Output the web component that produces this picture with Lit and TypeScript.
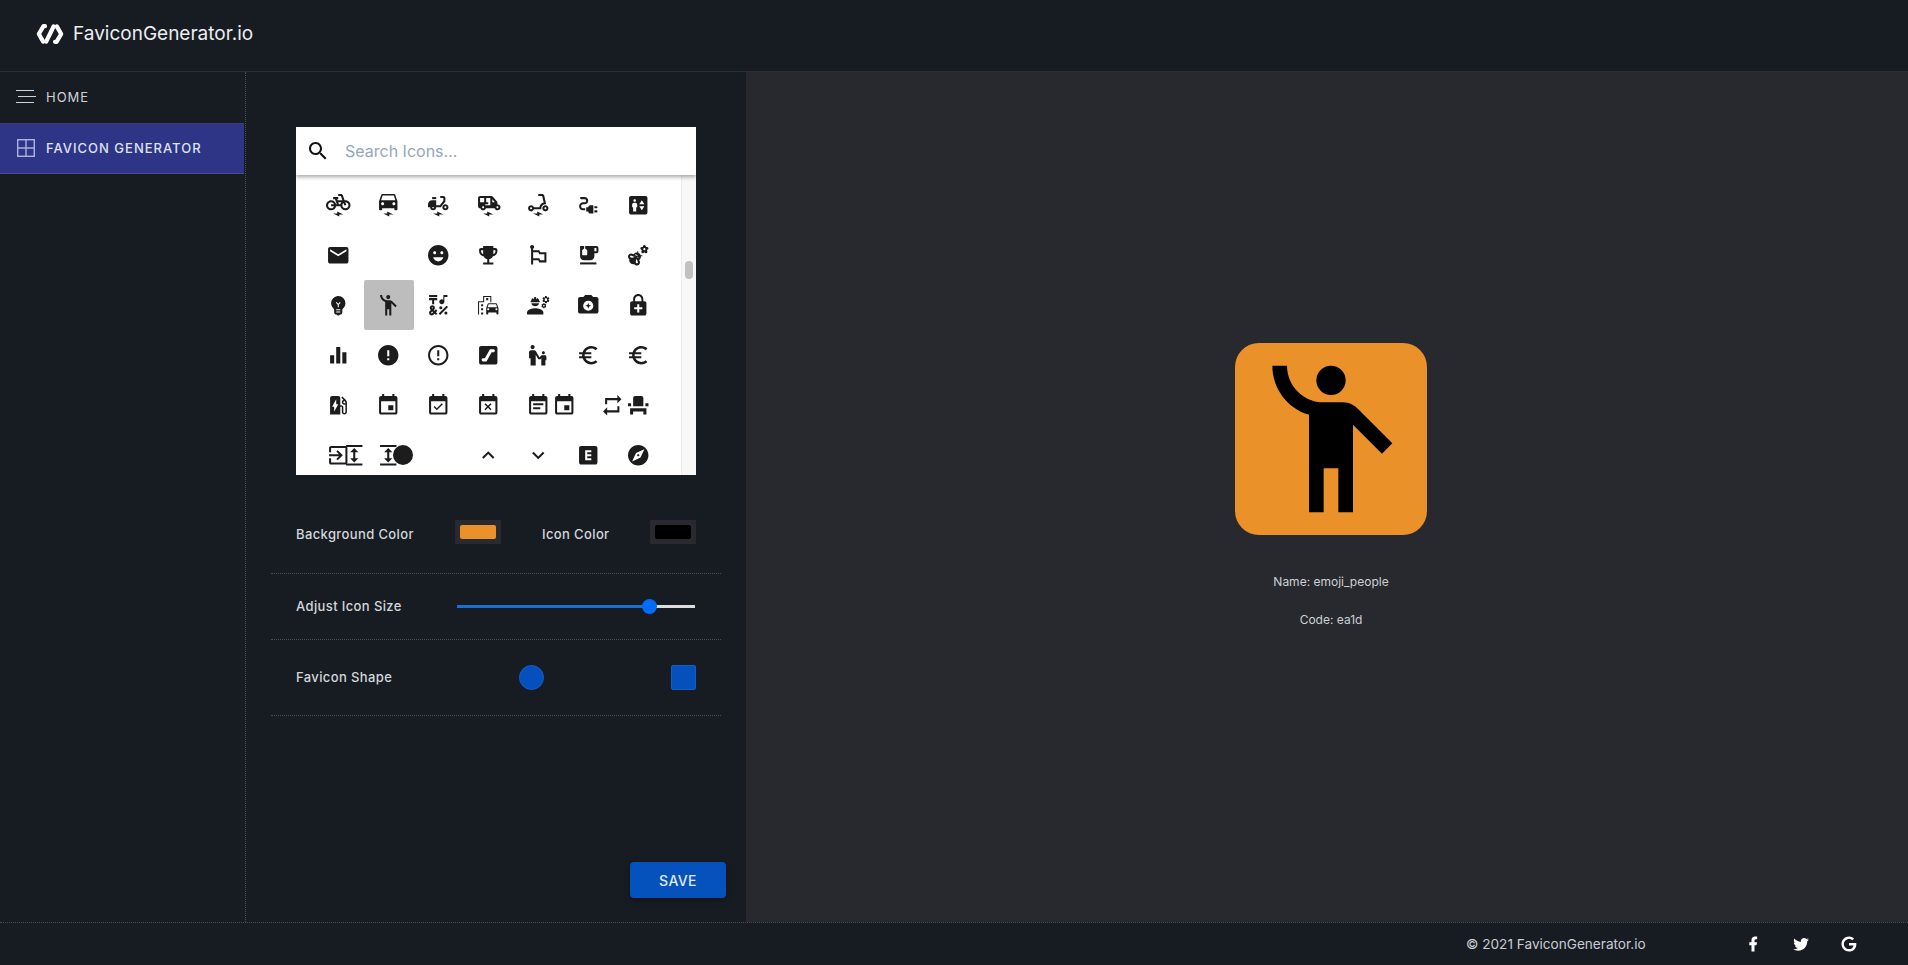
import { LitElement, html, css, svg } from "lit";
import { customElement } from "lit/decorators.js";
import { styleMap } from "lit/directives/style-map.js";

const BOLT = svg`<path d="M7 20h4v-2l6 3h-4v2z"/>`;
const CAL = "M19 3h-1V1h-2v2H8V1H6v2H5c-1.11 0-1.99.9-1.99 2L3 19c0 1.1.89 2 2 2h14c1.1 0 2-.9 2-2V5c0-1.1-.9-2-2-2zm0 16H5V8h14v11z";
const EURO = "M15 18.5c-2.51 0-4.68-1.42-5.76-3.5H15v-2H8.58c-.05-.33-.08-.66-.08-1s.03-.67.08-1H15V9H9.24C10.32 6.92 12.5 5.5 15 5.5c1.61 0 3.09.59 4.23 1.57L21 5.3C19.41 3.87 17.3 3 15 3c-3.92 0-7.24 2.51-8.48 6H3v2h3.06c-.04.33-.06.66-.06 1 0 .34.02.67.06 1H3v2h3.52c1.24 3.49 4.56 6 8.48 6 2.31 0 4.41-.87 6-2.3l-1.78-1.77c-1.13.98-2.6 1.57-4.22 1.57z";
const EVENT = "M17 12h-5v5h5v-5zM16 1v2H8V1H6v2H5c-1.11 0-1.99.9-1.99 2L3 19c0 1.1.89 2 2 2h14c1.1 0 2-.9 2-2V5c0-1.1-.9-2-2-2h-1V1h-2zm3 18H5V8h14v11z";
const EXPAND = "M4 20h16v2H4zM4 2h16v2H4zM13 9h3l-4-4-4 4h3v6H8l4 4 4-4h-3z";
const PEOPLE = svg`<circle cx="12" cy="4" r="2"/><path d="M15.89 8.11C15.5 7.72 14.83 7 13.53 7c-.21 0-1.42 0-2.54 0C8.24 6.99 6 4.75 6 2H4c0 3.16 2.11 5.84 5 6.71V22h2v-6h2v6h2V10.05L18.95 14l1.41-1.41-4.47-4.48z"/>`;

type Glyph = { g: unknown; dx?: number };
type Cell = { glyphs: Glyph[]; on?: boolean; dot?: boolean };
const p = (d: string) => svg`<path d=${d}/>`;
const one = (g: unknown): Cell => ({ glyphs: [{ g }] });

const CELLS: Cell[] = [
  one(svg`<path d="M19 7h-.82l-1.7-4.68C16.19 1.53 15.44 1 14.6 1H12v2h2.6l1.46 4h-4.81l-.36-1H12V4H7v2h1.75l1.82 5H9.9C9.46 8.77 7.59 7.12 5.25 7.01 2.45 6.87 0 9.2 0 12c0 2.8 2.2 5 5 5 2.46 0 4.45-1.69 4.9-4h4.2c.44 2.23 2.31 3.88 4.65 3.99 2.8.13 5.25-2.19 5.25-5C24 9.2 21.8 7 19 7zM7.82 13c-.4 1.17-1.49 2-2.82 2-1.68 0-3-1.32-3-3s1.32-3 3-3c1.33 0 2.42.83 2.82 2H5v2h2.82zm6.28-2h-1.4l-.73-2H15c-.44.58-.76 1.25-.9 2zm4.9 4c-1.68 0-3-1.32-3-3 0-.93.41-1.73 1.05-2.28l.96 2.64 1.88-.68-.97-2.67c.03 0 .06-.01.09-.01 1.68 0 3 1.32 3 3s-1.33 3-3.01 3z"/>${BOLT}`),
  one(svg`<path d="M18.92 2.01C18.72 1.42 18.16 1 17.5 1h-11c-.66 0-1.21.42-1.42 1.01L3 8v8c0 .55.45 1 1 1h1c.55 0 1-.45 1-1v-1h12v1c0 .55.45 1 1 1h1c.55 0 1-.45 1-1V8l-2.08-5.99zM6.5 12C5.67 12 5 11.33 5 10.5S5.67 9 6.5 9 8 9.67 8 10.5 7.33 12 6.5 12zm11 0c-.83 0-1.5-.67-1.5-1.5S16.67 9 17.5 9s1.5.67 1.5 1.5-.67 1.5-1.5 1.5zM5 7l1.5-4.5h11L19 7H5z"/>${BOLT}`),
  one(svg`<path d="M19 5c0-1.1-.9-2-2-2h-3v2h3v2.65L13.52 12H10V7H6c-2.21 0-4 1.79-4 4v3h2c0 1.66 1.34 3 3 3s3-1.34 3-3h4.48L19 8.35V5zM7 15c-.55 0-1-.45-1-1h2c0 .55-.45 1-1 1z"/><path d="M6 4h4v2H6z"/><path d="M19 11c-1.66 0-3 1.34-3 3s1.34 3 3 3 3-1.34 3-3-1.34-3-3-3zm0 4c-.55 0-1-.45-1-1s.45-1 1-1 1 .45 1 1-.45 1-1 1z"/>${BOLT}`),
  one(svg`<path d="M21 11.18V9.72c0-.47-.16-.92-.46-1.28L16.6 3.72c-.38-.46-.94-.72-1.54-.72H4c-1.1 0-2 .9-2 2v8c0 1.1.9 2 2 2h.18C4.6 16.16 5.7 17 7 17s2.4-.84 2.82-2h8.37c.41 1.16 1.51 2 2.81 2 1.66 0 3-1.34 3-3 0-1.3-.84-2.4-2-2.82zM18.4 9H16V6.12L18.4 9zM4 5h4v4H4V5zm3 10c-.55 0-1-.45-1-1s.45-1 1-1 1 .45 1 1-.45 1-1 1zm2-3v-1h3V9h-2V5h4v7H9zm12 3c-.55 0-1-.45-1-1s.45-1 1-1 1 .45 1 1-.45 1-1 1z"/>${BOLT}`),
  one(svg`<path d="M7.82 16H15v-1c0-2.21 1.79-4 4-4h.74l-1.9-8.44C17.63 1.65 16.82 1 15.89 1H12v2h3.89l1.4 6.25h-.01C14.23 9.87 13 12.52 13 15v-1H7.82C7.4 12.84 6.3 12 5 12c-1.66 0-3 1.34-3 3s1.34 3 3 3c1.3 0 2.4-.84 2.82-2zM5 16c-.55 0-1-.45-1-1s.45-1 1-1 1 .45 1 1-.45 1-1 1z"/><path d="M19 12c-1.66 0-3 1.34-3 3s1.34 3 3 3 3-1.34 3-3-1.34-3-3-3zm0 4c-.55 0-1-.45-1-1s.45-1 1-1 1 .45 1 1-.45 1-1 1z"/>${BOLT}`),
  one(svg`<path d="M21 14c0-.55-.45-1-1-1h-2v2h2c.55 0 1-.45 1-1z"/><path d="M20 17h-2v2h2c.55 0 1-.45 1-1s-.45-1-1-1z"/><path d="M12 14h-2v4h2c0 1.1.9 2 2 2h3v-8h-3c-1.1 0-2 .9-2 2z"/><path d="M5 13c0-1.1.9-2 2-2h1.5c1.93 0 3.5-1.57 3.5-3.5S10.43 4 8.5 4H5c-.55 0-1 .45-1 1s.45 1 1 1h3.5c.83 0 1.5.67 1.5 1.5S9.33 9 8.5 9H7c-2.21 0-4 1.79-4 4s1.79 4 4 4h2v-2H7c-1.1 0-2-.9-2-2z"/>`),
  one(p("M19 3H5c-1.1 0-2 .9-2 2v14c0 1.1.9 2 2 2h14c1.1 0 2-.9 2-2V5c0-1.1-.9-2-2-2zM8.5 6c.69 0 1.25.56 1.25 1.25S9.19 8.5 8.5 8.5s-1.25-.56-1.25-1.25S7.81 6 8.5 6zM11 14h-1v4H7v-4H6v-2.5c0-1.1.9-2 2-2h1c1.1 0 2 .9 2 2V14zm4.5 3L13 13h5l-2.5 4zM13 11l2.5-4 2.5 4h-5z")),
  one(p("M20 4H4c-1.1 0-1.99.9-1.99 2L2 18c0 1.1.9 2 2 2h16c1.1 0 2-.9 2-2V6c0-1.1-.9-2-2-2zm0 4l-8 5-8-5V6l8 5 8-5v2z")),
  { glyphs: [] },
  one(p("M11.99 2C6.47 2 2 6.48 2 12s4.47 10 9.99 10C17.52 22 22 17.52 22 12S17.52 2 11.99 2zM8.5 8C9.33 8 10 8.67 10 9.5S9.33 11 8.5 11 7 10.33 7 9.5 7.67 8 8.5 8zM12 18c-2.28 0-4.22-1.66-5-4h10c-.78 2.34-2.72 4-5 4zm3.5-7c-.83 0-1.5-.67-1.5-1.5S14.67 8 15.5 8s1.5.67 1.5 1.5-.67 1.5-1.5 1.5z")),
  one(p("M19 5h-2V3H7v2H5c-1.1 0-2 .9-2 2v1c0 2.55 1.92 4.63 4.39 4.94.63 1.5 1.98 2.63 3.61 2.96V19H7v2h10v-2h-4v-3.1c1.63-.33 2.98-1.46 3.61-2.96C19.08 12.63 21 10.55 21 8V7c0-1.1-.9-2-2-2zM5 8V7h2v3.82C5.84 10.4 5 9.3 5 8zm14 0c0 1.3-.84 2.4-2 2.82V7h2v1z")),
  one(p("M14 9l-1-2H7V5.72C7.6 5.38 8 4.74 8 4c0-1.1-.9-2-2-2S4 2.9 4 4c0 .74.4 1.38 1 1.72V21h2v-4h5l1 2h7V9h-6zm4 8h-4l-1-2H7V9h5l1 2h5v6z")),
  one(svg`<path d="M20 3H9v2.4l1.81 1.45c.12.09.19.24.19.39v4.26c0 .28-.22.5-.5.5h-4c-.28 0-.5-.22-.5-.5V7.24c0-.15.07-.3.19-.39L8 5.4V3H4v10c0 2.21 1.79 4 4 4h6c2.21 0 4-1.79 4-4v-3h2c1.11 0 2-.9 2-2V5c0-1.11-.89-2-2-2zm0 5h-2V5h2v3z"/><path d="M4 19h16v2H4z"/>`),
  one(svg`<path d="M21.94 4.88C21.76 4.35 21.25 4 20.68 4c-.03 0-.06 0-.09 0H19.6l-.31-.97C19.15 2.43 18.61 2 18 2c-.61 0-1.15.43-1.29 1.04L16.4 4h-.98c-.03 0-.06 0-.09 0-.57 0-1.08.35-1.26.88-.19.56.04 1.17.56 1.48l.87.52-.4 1.24c-.23.58-.04 1.25.45 1.62.23.17.51.26.78.26.31 0 .61-.11.86-.32L18 8.98l.81.7c.25.21.55.32.86.32.27 0 .55-.09.78-.26.5-.37.68-1.04.45-1.62l-.39-1.24.87-.52c.53-.31.75-.92.56-1.48zM18 7c-.55 0-1-.45-1-1s.45-1 1-1 1 .45 1 1-.45 1-1 1z"/><path fill-rule="evenodd" d="M13.49 10.51c-.43-.43-.94-.73-1.49-.93V8h-1v1.38c-.11-.01-.23-.03-.34-.03-1.02 0-2.05.39-2.83 1.17-.16.16-.3.34-.43.53L6 10.52c-1.56-.55-3.28.27-3.83 1.82-.27.75-.23 1.57.12 2.29.23.48.58.87 1 1.16-.38 1.35-.06 2.85 1 3.91 1.06 1.06 2.57 1.38 3.91 1 .29.42.68.77 1.16 1 .42.2.85.3 1.29.3.34 0 .68-.06 1.01-.17 1.56-.55 2.38-2.27 1.82-3.85l-.52-1.37c.18-.13.36-.27.53-.43.87-.87 1.24-2.04 1.14-3.17H16v-1h-1.59c-.19-.55-.49-1.06-.92-1.49zM4.67 14.29c-.25-.09-.45-.27-.57-.51s-.13-.51-.04-.76c.19-.52.76-.79 1.26-.61l3.16 1.19c-1.15.6-2.63 1.11-3.81.69zM10.99 19.94c-.25.09-.52.08-.76-.04-.24-.11-.42-.32-.51-.57-.42-1.18.09-2.66.69-3.81l1.19 3.16c.19.52-.08 1.07-.61 1.26zM12.2 14.6l-.61-1.61-1.67-.63-1.52-.56c.36-.29.79-.46 1.26-.46.53 0 1.04.21 1.41.59.73.73.77 1.87.13 2.67z"/>`),
  one(p("M12 3c-.46 0-.93.04-1.4.14-2.76.53-4.96 2.76-5.48 5.52-.48 2.61.48 5.01 2.22 6.56.43.38.66.91.66 1.47V19c0 1.1.9 2 2 2h.28c.35.6.98 1 1.72 1s1.38-.4 1.72-1H14c1.1 0 2-.9 2-2v-2.31c0-.55.22-1.09.64-1.46C18.09 13.95 19 12.08 19 10c0-3.87-3.13-7-7-7zm2 16h-4v-1h4v1zm0-2h-4v-1h4v1zm-1.5-5.59V14h-1v-2.59L9.67 9.59l.71-.71L12 10.5l1.62-1.62.71.71-1.83 1.82z")),
  { glyphs: [{ g: PEOPLE }], on: true },
  one(svg`<path d="M3 2h8v2H3z"/><path d="M6 11h2V7h3V5H3v2h3z"/><path d="M12.4 20.18l7.78-7.78 1.41 1.42-7.77 7.78z"/><circle cx="14.5" cy="14.5" r="1.5"/><circle cx="19.5" cy="19.5" r="1.5"/><path d="M15.5 11c1.38 0 2.5-1.12 2.5-2.5V4h3V2h-4v4.51C16.58 6.19 16.06 6 15.5 6 14.12 6 13 7.12 13 8.5s1.12 2.5 2.5 2.5z"/><path d="M9.74 15.96l-1.41 1.41-.71-.71.35-.35c.98-.98.98-2.56 0-3.54-.49-.49-1.13-.73-1.77-.73-.64 0-1.28.24-1.77.73-.98.98-.98 2.56 0 3.54l.35.35-1.06 1.06c-.98.98-.98 2.56 0 3.54.5.5 1.14.74 1.78.74s1.28-.24 1.77-.73l1.06-1.06 1.41 1.41 1.41-1.41-1.41-1.41 1.41-1.41-1.41-1.43zM5.85 14.2c.12-.12.26-.15.35-.15s.23.03.35.15c.19.2.19.51 0 .71l-.35.35-.35-.36c-.19-.19-.19-.51 0-.7zm0 5.65c-.12.12-.26.15-.35.15s-.23-.03-.35-.15c-.19-.19-.19-.51 0-.71l1.06-1.06.71.71-1.07 1.06z"/>`),
  one(svg`<path d="M20.57 10.66c-.14-.4-.52-.66-.97-.66h-7.19c-.46 0-.83.26-.98.66L10 14.77l.01 5.51c0 .38.31.72.69.72h.62c.38 0 .68-.38.68-.76V19h8v1.24c0 .38.31.76.69.76h.61c.38 0 .69-.34.69-.72l.01-1.37v-4.14l-1.43-4.11zm-8.16.34h7.19l1.03 3h-9.25l1.03-3zM12 17c-.55 0-1-.45-1-1s.45-1 1-1 1 .45 1 1-.45 1-1 1zm8 0c-.55 0-1-.45-1-1s.45-1 1-1 1 .45 1 1-.45 1-1 1z"/><path d="M14 9h1V3H7v5H2v13h1V9h5V4h6z"/><path d="M5 11h2v2H5zM10 5h2v2h-2zM5 15h2v2H5zM5 19h2v2H5z"/>`),
  one(svg`<path d="M9 15c-2.67 0-8 1.34-8 4v2h16v-2c0-2.66-5.33-4-8-4z"/><path d="M22.1 6.84c.01-.11.02-.22.02-.34 0-.12-.01-.23-.03-.34l.74-.58c.07-.05.08-.15.04-.22l-.7-1.21c-.04-.08-.14-.1-.21-.08l-.87.35c-.18-.14-.38-.25-.59-.34l-.13-.93c-.01-.09-.08-.15-.16-.15h-1.4c-.09 0-.16.06-.17.15l-.13.93c-.21.09-.41.21-.59.34l-.87-.35c-.08-.03-.17 0-.21.08l-.7 1.21c-.04.08-.03.17.04.22l.74.58c-.02.11-.03.23-.03.34 0 .11.01.23.03.34l-.74.58c-.07.05-.08.15-.04.22l.7 1.21c.04.08.14.1.21.08l.87-.35c.18.14.38.25.59.34l.13.93c.01.09.09.15.18.15h1.4c.09 0 .16-.06.17-.15l.13-.93c.21-.09.41-.21.59-.34l.87.35c.08.03.17 0 .21-.08l.7-1.21c.04-.08.03-.17-.04-.22l-.74-.58zM19.5 7.75c-.69 0-1.25-.56-1.25-1.25s.56-1.25 1.25-1.25 1.25.56 1.25 1.25-.56 1.25-1.25 1.25z"/><path d="M19.92 11.68l-.5-.87c-.03-.06-.1-.08-.15-.06l-.62.25c-.13-.1-.27-.18-.42-.24l-.09-.66c-.02-.06-.08-.1-.14-.1h-1c-.06 0-.11.04-.12.11l-.09.66c-.15.06-.29.15-.42.24l-.62-.25c-.06-.02-.12 0-.15.06l-.5.87c-.03.06-.02.12.03.16l.53.41c-.01.08-.02.16-.02.24 0 .08.01.17.02.24l-.53.41c-.05.04-.06.11-.03.16l.5.87c.03.06.1.08.15.06l.62-.25c.13.1.27.18.42.24l.09.66c.01.07.06.11.12.11h1c.06 0 .12-.04.12-.11l.09-.66c.15-.06.29-.15.42-.24l.62.25c.06.02.12 0 .15-.06l.5-.87c.03-.06.02-.12-.03-.16l-.52-.41c.01-.08.02-.16.02-.24 0-.08-.01-.17-.02-.24l.53-.41c.05-.04.06-.11.04-.17zM17.5 13.33c-.46 0-.83-.38-.83-.83 0-.46.38-.83.83-.83s.83.38.83.83c0 .46-.37.83-.83.83z"/><path d="M4.74 9h8.53c.27 0 .49-.22.49-.49v-.02c0-.27-.22-.49-.49-.49H13c0-1.48-.81-2.75-2-3.45v.95c0 .28-.22.5-.5.5s-.5-.22-.5-.5V4.14C9.68 4.06 9.35 4 9 4s-.68.06-1 .14V5.5c0 .28-.22.5-.5.5S7 5.78 7 5.5v-.95C5.81 5.25 5 6.52 5 8h-.26c-.27 0-.49.22-.49.49v.03c0 .26.22.48.49.48z"/><path d="M9 13c1.86 0 3.41-1.28 3.86-3H5.14c.45 1.72 2 3 3.86 3z"/>`),
  one(p("M20 4h-3.17L15 2H9L7.17 4H4c-1.1 0-2 .9-2 2v12c0 1.1.9 2 2 2h16c1.1 0 2-.9 2-2V6c0-1.1-.9-2-2-2zM12 7.5a5 5 0 1 1 0 10 5 5 0 0 1 0-10zM12 9.5l.8 2.2 2.2.8-2.2.8-.8 2.2-.8-2.2-2.2-.8 2.2-.8z")),
  one(p("M18 8h-1V6c0-2.76-2.24-5-5-5S7 3.24 7 6v2H6c-1.1 0-2 .9-2 2v10c0 1.1.9 2 2 2h12c1.1 0 2-.9 2-2V10c0-1.1-.9-2-2-2zM8.9 6c0-1.71 1.39-3.1 3.1-3.1s3.1 1.39 3.1 3.1v2H8.9V6zM16 16h-3v3h-2v-3H8v-2h3v-3h2v3h3v2z")),
  one(p("M10 20h4V4h-4v16zm-6 0h4v-8H4v8zM16 9v11h4V9h-4z")),
  one(p("M12 2C6.48 2 2 6.48 2 12s4.48 10 10 10 10-4.48 10-10S17.52 2 12 2zm1 15h-2v-2h2v2zm0-4h-2V7h2v6z")),
  one(p("M11 15h2v2h-2zm0-8h2v6h-2zm.99-5C6.47 2 2 6.48 2 12s4.47 10 9.99 10C17.52 22 22 17.52 22 12S17.52 2 11.99 2zM12 20c-4.42 0-8-3.58-8-8s3.58-8 8-8 8 3.58 8 8-3.58 8-8 8z")),
  one(p("M19 3H5c-1.1 0-2 .9-2 2v14c0 1.1.9 2 2 2h14c1.1 0 2-.9 2-2V5c0-1.1-.9-2-2-2zm-2 6h-1.7l-5 9H7c-.83 0-1.5-.67-1.5-1.5S6.17 15 7 15h1.7l5-9H17c.83 0 1.5.67 1.5 1.5S17.83 9 17 9z")),
  one(p("M6.5 2c1.1 0 2 .9 2 2s-.9 2-2 2-2-.9-2-2 .9-2 2-2zm9 7.5c0 .83.67 1.5 1.5 1.5s1.5-.67 1.5-1.5S17.83 8 17 8s-1.5.67-1.5 1.5zm3 2.5h-2.84c-.58.01-1.14.32-1.45.86l-.92 1.32L9.72 8c-.37-.63-1.03-.99-1.71-1H5c-1.1 0-2 .9-2 2v6h1.5v7h5V11.61L12.03 16h2.2l.77-1.1V22h4v-5h1v-3.5c0-.82-.67-1.5-1.5-1.5z")),
  one(p(EURO)),
  one(p(EURO)),
  one(p("M19.77 7.23l.01-.01-3.72-3.72L15 4.56l2.11 2.11c-.94.36-1.61 1.26-1.61 2.33 0 1.38 1.12 2.5 2.5 2.5.36 0 .69-.08 1-.21v7.21c0 .55-.45 1-1 1s-1-.45-1-1V14c0-1.1-.9-2-2-2h-1V5c0-1.1-.9-2-2-2H6c-1.1 0-2 .9-2 2v16h10v-7.5h1.5v5c0 1.38 1.12 2.5 2.5 2.5s2.5-1.12 2.5-2.5V9c0-.69-.28-1.32-.73-1.77zM18 10c-.55 0-1-.45-1-1s.45-1 1-1 1 .45 1 1-.45 1-1 1zM8 18v-4.5H6L10 6v5h2l-4 7z")),
  one(p(EVENT)),
  one(svg`<path d=${CAL}/><path d="M16.53 11.06L15.47 10l-4.88 4.88-2.12-2.12-1.06 1.06L10.59 17l5.94-5.94z"/>`),
  one(svg`<path d=${CAL}/><path d="M9.31 17l2.44-2.44L14.19 17l1.06-1.06-2.44-2.44 2.44-2.44L14.19 10l-2.44 2.44L9.31 10l-1.06 1.06 2.44 2.44-2.44 2.44L9.31 17z"/>`),
  one(svg`<path d=${CAL}/><path d="M17 10H7v2h10v-2zM14 14H7v2h7v-2z"/>`),
  { glyphs: [{ g: p(EVENT), dx: -24 }, { g: p("M7 7h10v3l4-4-4-4v3H5v6h2V7zm10 10H7v-3l-4 4 4 4v-3h12v-6h-2v4z"), dx: 24 }] },
  one(p("M4 18v3h3v-3h10v3h3v-6H4zm15-8h3v3h-3zM2 10h3v3H2zm15 3H7V5c0-1.1.9-2 2-2h6c1.1 0 2 .9 2 2v8z")),
  { glyphs: [{ g: p("M10.09 15.59L11.5 17l5-5-5-5-1.41 1.41L12.67 11H3v2h9.67l-2.58 2.59zM19 3H5c-1.11 0-2 .9-2 2v4h2V5h14v14H5v-4H3v4c0 1.1.89 2 2 2h14c1.1 0 2-.9 2-2V5c0-1.1-.9-2-2-2z") }, { g: p(EXPAND), dx: 16 }] },
  { glyphs: [{ g: p(EXPAND) }], dot: true },
  { glyphs: [] },
  one(p("M12 8l-6 6 1.41 1.41L12 10.83l4.59 4.58L18 14z")),
  one(p("M16.59 8.59L12 13.17 7.41 8.59 6 10l6 6 6-6z")),
  one(p("M19 3H5c-1.1 0-2 .9-2 2v14c0 1.1.9 2 2 2h14c1.1 0 2-.9 2-2V5c0-1.1-.9-2-2-2zm-4 6h-4v2h4v2h-4v2h4v2H9V7h6v2z")),
  one(p("M12 10.9c-.61 0-1.1.49-1.1 1.1s.49 1.1 1.1 1.1c.61 0 1.1-.49 1.1-1.1s-.49-1.1-1.1-1.1zM12 2C6.48 2 2 6.48 2 12s4.48 10 10 10 10-4.48 10-10S17.52 2 12 2zm2.19 12.19L6 18l3.81-8.19L18 6l-3.81 8.19z")),
];

@customElement("app-root")
export class AppRoot extends LitElement {
  static styles = css`
    :host { display: block; font-family: Inter, "Liberation Sans", sans-serif; color: #d9dbdf; }
    * { box-sizing: border-box; }
    .app { display: flex; flex-direction: column; height: 965px; background: #171c23; overflow: hidden; }
    .top { height: 72px; flex: none; display: flex; align-items: center; padding: 0 0 4px 36px; gap: 9px; border-bottom: 1px solid #2a2e36; }
    .logo { width: 28px; height: 22px; display: block; }
    .brand { font-size: 19px; color: #eceef0; }
    .main { flex: 1; min-height: 0; display: flex; }
    .side { width: 246px; flex: none; border-right: 1px dotted #4a4e55; padding-top: 1px; }
    .nav { height: 50px; display: flex; align-items: center; gap: 10px; padding: 0 0 2px 16px; font-size: 13px; letter-spacing: 1px; color: #cfd2d6; }
    .nav svg { width: 20px; height: 20px; flex: none; }
    .nav.active { height: 51px; margin-right: 1px; background: #2e3587; border-top: 1px solid #3a3f78; border-bottom: 1px solid #444c9a; color: #dfe1ee; font-weight: 500; }
    .panel { width: 500px; flex: none; display: flex; flex-direction: column; padding: 55px 25px 24px; }
    .picker { margin: 0 25px; height: 348px; background: #fff; display: flex; flex-direction: column; overflow: hidden; }
    .search { height: 48px; flex: none; display: flex; align-items: center; gap: 13px; padding-left: 10px; background: #fff; box-shadow: 0 2px 4px rgba(0,0,0,.35); position: relative; z-index: 2; }
    .search svg { width: 24px; height: 24px; fill: #111; }
    .search input { border: 0; outline: 0; background: none; font: 16px Inter, sans-serif; flex: 1; min-width: 0; }
    .search input::placeholder { color: #94a6bd; opacity: 1; }
    .body { flex: 1; min-height: 0; display: flex; overflow: hidden; }
    .grid { flex: 1; display: grid; grid-template-columns: repeat(7, 50px); grid-auto-rows: 50px; padding: 5px 0 0 18px; align-content: start; }
    .cell { position: relative; }
    .cell.on { background: #bdbdbd; border-radius: 2px; }
    .cell svg { position: absolute; left: 12.25px; top: 12.75px; width: 24.5px; height: 24.5px; fill: #1c1c1c; }
    .dot { position: absolute; left: 28.5px; top: 15px; width: 20px; height: 20px; border-radius: 50%; background: #1c1c1c; }
    .track { width: 15px; flex: none; background: #f8f8f8; border-left: 1px solid #ececec; position: relative; }
    .thumb { position: absolute; left: 3px; top: 86px; width: 8px; height: 18px; border-radius: 4px; background: #c1c1c1; }
    .row { display: flex; align-items: center; border-bottom: 1px dotted #4a4e55; font-size: 13px; font-weight: 500; letter-spacing: .38px; color: #d4d6da; padding: 0 0 0 25px; }
    .colors { height: 99px; padding-top: 20px; padding-right: 25px; }
    .swatch { width: 46px; height: 24px; padding: 5px; background: #282a30; margin-top: -5px; }
    .swatch i { display: block; width: 100%; height: 100%; border-radius: 2px; }
    .orange { background: #ea9229; }
    .black { background: #000; }
    .bglabel { width: 159px; }
    .iconlabel { margin-left: 41px; width: 108px; }
    .size { height: 66px; padding-right: 26px; padding-bottom: 2px; }
    .sizelabel { width: 161px; }
    .slider { flex: 1; height: 16px; position: relative; }
    .rail { position: absolute; left: 0; right: 0; top: 7px; height: 3px; background: #ddd; }
    .fill { position: absolute; left: 0; top: 7px; width: 192px; height: 3px; background: #1a6fd0; }
    .knob { position: absolute; left: 184.5px; top: 1px; width: 15px; height: 15px; border-radius: 50%; background: #006dfa; }
    .shape { height: 76px; padding-right: 25px; }
    .shapelabel { width: 223px; margin-top: -2px; }
    .sh { width: 25px; height: 25px; background: #0550bd; border: 1px solid #0f5fc9; }
    .circle { border-radius: 50%; }
    .square { border-radius: 2px; margin-left: auto; }
    .save { margin-top: auto; align-self: flex-end; width: 96px; height: 36px; margin-right: -5px; background: #0552bd; color: #e3e9f4; border: 0; border-radius: 4px; font: 500 14px Inter, sans-serif; letter-spacing: .4px; box-shadow: 0 2px 6px rgba(0,0,0,.3); }
    .preview { flex: 1; background: #27292e; display: flex; flex-direction: column; align-items: center; padding: 271px 0 0 8px; font-size: 12px; color: #ced0d4; }
    .tile { width: 192px; height: 192px; background: #ea9229; border-radius: 24px; display: flex; align-items: center; justify-content: center; margin-bottom: 39px; }
    .tile svg { width: 176px; height: 176px; fill: #000; }
    .preview p { margin: 0 0 23px; line-height: 15px; }
    .foot { height: 43px; flex: none; border-top: 1px dotted #4a4e55; display: flex; align-items: center; padding-left: 1466px; font-size: 13.6px; color: #c9ccd2; }
    .copy { width: 278px; white-space: nowrap; }
    .soc { display: flex; gap: 30px; align-items: center; }
    .soc svg { width: 18px; height: 18px; fill: #fff; display: block; }
  `;

  private cell(c: Cell) {
    return html`<div class="cell ${c.on ? "on" : ""}">
      ${c.glyphs.map(
        (i) => html`<svg viewBox="0 0 24 24" style=${styleMap(i.dx ? { transform: `translateX(${i.dx}px)` } : {})}>${i.g}</svg>`
      )}
      ${c.dot ? html`<div class="dot"></div>` : ""}
    </div>`;
  }

  render() {
    return html`
      <div class="app">
        <header class="top">
          <svg class="logo" viewBox="0 0 28 22" fill="none" stroke="#fff" stroke-width="4.2" stroke-linejoin="round" stroke-linecap="round">
            <path d="M9 3.2H7.5L2.8 11l4.4 7.6"/><path d="M19 18.8h1.500l4.700-7.800-4.400-7.600"/><path d="M10.200 18.500L17.600 3.500"/>
          </svg>
          <span class="brand">FaviconGenerator.io</span>
        </header>
        <div class="main">
          <nav class="side">
            <div class="nav">
              <svg viewBox="0 0 20 20" stroke="#cfd2d6" stroke-width="1"><path d="M0 3.5h18M2 9.5h18M0 15.5h18"/></svg>
              <span>HOME</span>
            </div>
            <div class="nav active">
              <svg viewBox="0 0 20 20" fill="none" stroke="#aeb3dc" stroke-width="1.4"><rect x="1.7" y="1.7" width="16.6" height="16.6"/><path d="M10 1.7v16.6M1.7 10h16.6"/></svg>
              <span>FAVICON GENERATOR</span>
            </div>
          </nav>
          <section class="panel">
            <div class="picker">
              <div class="search">
                <svg viewBox="0 0 24 24"><path d="M15.5 14h-.79l-.28-.27C15.41 12.59 16 11.11 16 9.5 16 5.91 13.09 3 9.5 3S3 5.91 3 9.5 5.91 16 9.5 16c1.61 0 3.09-.59 4.23-1.57l.27.28v.79l5 4.99L20.49 19l-4.99-5zm-6 0C7.01 14 5 11.99 5 9.5S7.01 5 9.5 5 14 7.01 14 9.5 11.99 14 9.5 14z"/></svg>
                <input placeholder="Search Icons..." />
              </div>
              <div class="body">
                <div class="grid">${CELLS.map((c) => this.cell(c))}</div>
                <div class="track"><div class="thumb"></div></div>
              </div>
            </div>
            <div class="row colors">
              <span class="bglabel">Background Color</span>
              <div class="swatch"><i class="orange"></i></div>
              <span class="iconlabel">Icon Color</span>
              <div class="swatch"><i class="black"></i></div>
            </div>
            <div class="row size">
              <span class="sizelabel">Adjust Icon Size</span>
              <div class="slider"><div class="rail"></div><div class="fill"></div><div class="knob"></div></div>
            </div>
            <div class="row shape">
              <span class="shapelabel">Favicon Shape</span>
              <div class="sh circle"></div>
              <div class="sh square"></div>
            </div>
            <button class="save">SAVE</button>
          </section>
          <section class="preview">
            <div class="tile"><svg viewBox="0 0 24 24">${PEOPLE}</svg></div>
            <p>Name: emoji_people</p>
            <p>Code: ea1d</p>
          </section>
        </div>
        <footer class="foot">
          <span class="copy">© 2021 FaviconGenerator.io</span>
          <div class="soc">
            <svg viewBox="0 0 24 24"><path d="M14 13.5h2.5l1-4H14v-2c0-1.03 0-2 2-2h1.5V2.14c-.33-.04-1.56-.14-2.86-.14C11.93 2 10 3.66 10 6.7v2.8H7v4h3V22h4v-8.5z"/></svg>
            <svg viewBox="0 0 24 24"><path d="M22.46 6c-.77.35-1.6.58-2.46.69.88-.53 1.56-1.37 1.88-2.38-.83.5-1.75.85-2.72 1.05C18.37 4.5 17.26 4 16 4c-2.35 0-4.27 1.92-4.27 4.29 0 .34.04.67.11.98C8.28 9.09 5.11 7.38 3 4.79c-.37.63-.58 1.37-.58 2.15 0 1.49.75 2.81 1.91 3.56-.71 0-1.37-.2-1.95-.5v.03c0 2.08 1.48 3.82 3.44 4.21a4.22 4.22 0 0 1-1.93.07 4.28 4.28 0 0 0 4 2.98 8.52 8.52 0 0 1-5.33 1.84c-.34 0-.68-.02-1.02-.06C3.44 20.29 5.7 21 8.12 21 16 21 20.33 14.46 20.33 8.79c0-.19 0-.37-.01-.56.84-.6 1.56-1.36 2.14-2.23z"/></svg>
            <svg viewBox="0 0 24 24"><path d="M12 10.5h9.6c.1.5.2 1 .2 1.7 0 5.8-3.9 9.8-9.8 9.8-5.5 0-10-4.5-10-10S6.5 2 12 2c2.7 0 5 1 6.7 2.6l-2.3 2.3C15.3 5.9 13.8 5.2 12 5.2c-3.7 0-6.8 3.1-6.8 6.8s3.1 6.8 6.8 6.800c3.3 0 5.500-1.900 6-4.900h-6v-3.400z"/></svg>
          </div>
        </footer>
      </div>
    `;
  }
}
